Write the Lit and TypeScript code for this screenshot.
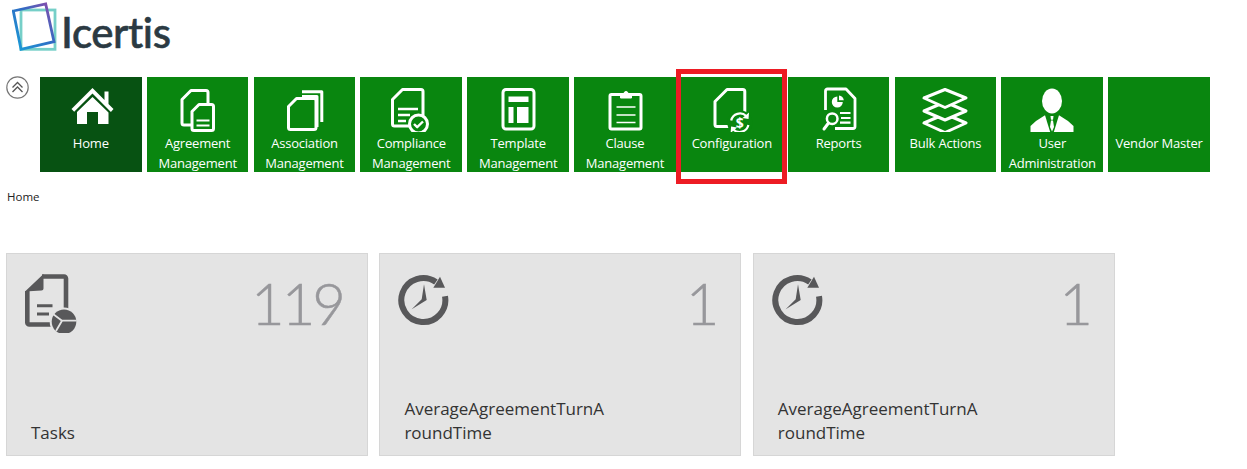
import { LitElement, html, css, svg } from "lit";
import { customElement } from "lit/decorators.js";

const G = "#09860f";
const doc = (x: number, y: number, r: number, b: number, f: number) =>
  `M${x + f} ${y}H${r - 2}a2 2 0 0 1 2 2V${b - 2}a2 2 0 0 1-2 2H${x + 2}a2 2 0 0 1-2-2V${y + f}Z`;

const icons: Record<string, unknown> = {
  home: svg`<g fill="#fff"><path d="M4.5 25 25.5 4 37.5 16V7.5h4v12.6l5 5-2.6 2.8L25.5 9.5 7.2 27.8Z"/><path d="M10 28 25.5 13 41.5 28.5V40H31V28H20V40H10Z"/></g>`,
  agreement: svg`<g fill="none" stroke="#fff" stroke-width="3" stroke-linejoin="round"><path d="${doc(8, 6.5, 34, 41, 9)}"/><path d="${doc(18, 20.5, 39.5, 46.5, 7)}" fill="${G}"/><path d="M22.5 36.5h13M22.5 41.5h13" stroke-width="2"/></g>`,
  association: svg`<g fill="none" stroke="#fff" stroke-width="3" stroke-linejoin="round"><path d="M22 7.8H41.8V38"/><path d="M22 12.5H37V43"/><path d="${doc(8.5, 14.5, 36, 45.5, 8)}" fill="${G}"/></g>`,
  compliance: svg`<g fill="none" stroke="#fff" stroke-width="3" stroke-linejoin="round"><path d="${doc(5.5, 5.5, 36, 42, 10)}"/><path d="M11 25h20M11 31h12M11 37h8" stroke-width="2.4"/><circle cx="31.5" cy="40" r="9" fill="${G}"/><path d="m27 40 3.2 3.2L36 37.5" stroke-width="2.4"/></g>`,
  template: svg`<g fill="#fff"><rect x="9" y="5.5" width="31" height="39.5" rx="3" fill="none" stroke="#fff" stroke-width="3"/><rect x="14.5" y="12.5" width="20" height="5.5"/><rect x="14.5" y="23" width="5" height="16"/><rect x="23" y="23" width="11.5" height="16"/></g>`,
  clause: svg`<g fill="none" stroke="#fff" stroke-linejoin="round"><rect x="9" y="10.5" width="31" height="34.5" rx="1.5" stroke-width="3"/><path fill="#fff" stroke-width="1" d="M19.5 14V9.5h3.5a2 2 0 0 1 4 0H30.5V14Z"/><path d="M15.5 23h19M15.5 31h19M15.5 38.5h19" stroke-width="1.3"/></g>`,
  config: svg`<g fill="none" stroke="#fff" stroke-width="3" stroke-linejoin="round"><path d="${doc(7, 5.5, 36.8, 42.5, 12)}"/><circle cx="31.8" cy="38.7" r="12.5" fill="${G}" stroke="none"/><path d="M23.2 36.5a9 9 0 0 1 15-4.5M40.4 41a9 9 0 0 1-15 4.5" stroke-width="2.2"/><path d="m41 28.5-.5 6.5-6-1ZM22.6 49l.5-6.5 6 1Z" fill="#fff" stroke="none"/><text x="31.8" y="43.8" text-anchor="middle" fill="#fff" stroke="none" font-family="Open Sans, sans-serif" font-size="14" font-weight="700">$</text></g>`,
  reports: svg`<g fill="none" stroke="#fff" stroke-width="2.8" stroke-linejoin="round"><path d="M10.5 26V7a2 2 0 0 1 2-2H31L40 14.5V42.5a2 2 0 0 1-2 2H20"/><path fill="#fff" stroke="none" d="M22.3 12.5a5.5 5.5 0 1 0 5.5 5.5H22.3Z"/><path d="M24 11.5a5.5 5.5 0 0 1 4.8 4.8H24Z" fill="#fff" stroke="none"/><path d="M25 29h10.5M26 34h9.5M25 38.7h10.5" stroke-width="2.2"/><circle cx="17.2" cy="34.7" r="5.3" stroke-width="2.5"/><path d="M13.5 39 9 45" stroke-width="3" stroke-linecap="round"/></g>`,
  bulk: svg`<g fill="${G}" stroke="#fff" stroke-width="3" stroke-linejoin="round"><path d="M24 30 45 39 24 48.5 3 39Z"/><path d="M24 18 45 27 24 36 3 27Z"/><path d="M24 5.5 45 14 24 23.5 3 14Z"/></g>`,
  user: svg`<g fill="#fff"><ellipse cx="24" cy="17" rx="10" ry="12.5"/><path d="M2.5 49V42L8 37 17 31.3 22.5 49Z"/><path d="M45.5 49V42L40 37 31 31.3 25.5 49Z"/><path d="M22.5 32h3l-.5 3.8h-2Z"/><path d="M23 36.5h2l1 6.5-2 4.5-2-4.5Z"/></g>`,
};

const tiles = [
  ["home", "Home", true],
  ["agreement", "Agreement Management"],
  ["association", "Association Management"],
  ["compliance", "Compliance Management"],
  ["template", "Template Management"],
  ["clause", "Clause Management"],
  ["config", "Configuration"],
  ["reports", "Reports"],
  ["bulk", "Bulk Actions"],
  ["user", "User Administration"],
  ["", "Vendor Master"],
] as [string, string, boolean?][];

const tasksIcon = svg`<svg class="cicon" viewBox="0 0 60 60" width="60" height="60"><g fill="none" stroke="#58585a" stroke-linejoin="round"><path stroke-width="4.6" d="M18 3.5H40a2 2 0 0 1 2 2V38M28 51.5H5.3a2 2 0 0 1-2-2V18"/><path fill="#58585a" stroke="none" d="M1 18.5 19.5 1V15.5a2 2 0 0 1-2 2Z"/><path stroke-width="3" d="M13 32.7h15.5M13 41h12"/></g><circle cx="40" cy="48.7" r="14.3" fill="#e4e4e4"/><circle cx="40" cy="48.7" r="12.3" fill="#58585a"/><path d="M38 47.7 29 41M38 47.7H52.5M38 47.7 32 58" stroke="#e4e4e4" stroke-width="1.8" fill="none"/></svg>`;
const clockIcon = svg`<svg class="cicon" viewBox="0 0 60 60" width="60" height="60"><path d="M48 23.2A22 22 0 1 1 38.9 9" fill="none" stroke="#58585a" stroke-width="6"/><g fill="#58585a"><path d="M43 3.7 48 14.7H36.3Z"/><path d="M27 11.3 29.7 27 14.7 36.3 24.7 26.3Z"/></g></svg>`;

const cards = [
  { icon: tasksIcon, n: "119", label: "Tasks" },
  { icon: clockIcon, n: "1", label: "AverageAgreementTurnAroundTime" },
  { icon: clockIcon, n: "1", label: "AverageAgreementTurnAroundTime" },
];

@customElement("app-root")
export class AppRoot extends LitElement {
  static styles = css`
    :host { display: block; width: 1247px; height: 469px; overflow: hidden; background: #fff; font-family: "Open Sans", sans-serif; }
    .logo { display: flex; align-items: flex-start; height: 77px; padding-left: 12px; box-sizing: border-box; }
    .logo-text { font-family: Lato, sans-serif; font-size: 42px; font-weight: 500; line-height: 52px; color: #2b3a43; margin: 6px 0 0 3px; letter-spacing: -0.4px; -webkit-text-stroke: 0.6px #2b3a43; }
    .navrow { display: flex; align-items: flex-start; position: relative; }
    .toggle { width: 23px; height: 23px; margin: -1px 11px 0 6px; flex: none; }
    .nav { display: flex; gap: 5.2px; }
    .tile { width: 101.65px; height: 95px; background: #09860f; color: #fff; overflow: hidden; padding-top: 7px; box-sizing: border-box; text-align: center; }
    .tile.on { background: #075212; }
    .tile svg { display: block; margin: 0 auto; }
    .tlabel { margin-top: 1px; font-size: 13px; line-height: 20px; letter-spacing: -0.2px; }
    .mark { position: absolute; left: 676px; top: -8px; width: 111px; height: 115px; box-sizing: border-box; border: 5px solid #ed1c24; }
    .crumb { font-size: 11.5px; line-height: 16px; color: #222; margin: 17px 0 0 7px; }
    .cards { display: flex; gap: 11.4px; margin: 48px 0 0 6px; }
    .card { width: 362px; height: 203px; box-sizing: border-box; background: #e4e4e4; border: 1px solid #d6d6d6; padding: 17px 24px 10px 15px; display: flex; flex-direction: column; }
    .top { display: flex; justify-content: space-between; align-items: flex-start; flex: 1; }
    .cicon { display: block; margin: 2px 0 0 2px; }
    .num { font-family: Lato, sans-serif; font-size: 58px; font-weight: 300; line-height: 70px; color: #97979b; margin-top: -3px; letter-spacing: -3px; -webkit-text-stroke: 0.5px #97979b; }
    .clabel { font-size: 17px; line-height: 24px; color: #333; width: 204px; word-break: break-all; margin-left: 9px; }
  `;

  render() {
    return html`
      <div class="logo">
        <svg width="46" height="52" viewBox="0 0 46 52">
          <defs>
            <linearGradient id="lg" x1="0" y1="1" x2="1" y2="0"><stop offset="0" stop-color="#17a0d8"/><stop offset=".55" stop-color="#2f6cc4"/><stop offset="1" stop-color="#8f48a8"/></linearGradient>
          </defs>
          <rect x="9" y="10" width="34" height="39.3" fill="none" stroke="#76cfc8" stroke-width="2.8"/>
          <path d="M1.3 11 33.7 4 42 41.7 9 49.3Z" fill="none" stroke="url(#lg)" stroke-width="2.8"/>
        </svg>
        <div class="logo-text">Icertis</div>
      </div>
      <div class="navrow">
        <svg class="toggle" viewBox="0 0 23 23"><circle cx="11.5" cy="11.5" r="10.7" fill="#fff" stroke="#777" stroke-width="1.2"/><path d="m6.5 11.5 5-5 5 5M6.5 16l5-5 5 5" fill="none" stroke="#555" stroke-width="1.3"/></svg>
        <div class="nav">
          ${tiles.map(([ic, label, on]) => html`
            <div class="tile ${on ? "on" : ""}">
              <svg width="48" height="48" viewBox="0 0 48 48">${ic ? icons[ic] : ""}</svg>
              <div class="tlabel">${label}</div>
            </div>`)}
        </div>
        <div class="mark"></div>
      </div>
      <div class="crumb">Home</div>
      <div class="cards">
        ${cards.map((c) => html`
          <div class="card">
            <div class="top">${c.icon}<div class="num">${c.n}</div></div>
            <div class="clabel">${c.label}</div>
          </div>`)}
      </div>
    `;
  }
}
